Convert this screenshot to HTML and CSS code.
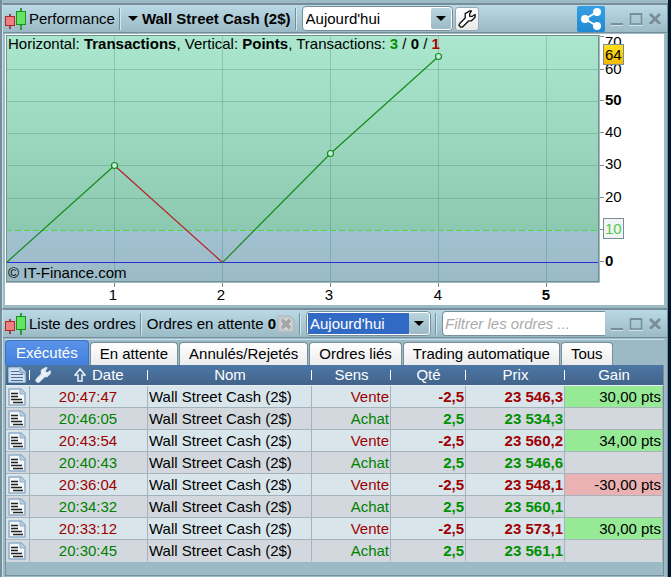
FILE: index.html
```html
<!DOCTYPE html>
<html lang="fr">
<head>
    <meta charset="UTF-8">
    <meta name="viewport" content="width=device-width, initial-scale=1.0">
    <title>Performance</title>
    <link rel="stylesheet" href="styles.css">
</head>
<body>
    <!-- shared icons -->
    <svg class="sprite" width="0" height="0">
        <symbol id="candles" viewBox="0 0 22 24">
            <path d="M5 7v15" stroke="#a04444" stroke-width="2"/>
            <rect x="0.500" y="9.500" width="9" height="9" fill="#f08080" stroke="#b02828"/>
            <path d="M16 1v22" stroke="#2f9c2f" stroke-width="2"/>
            <rect x="11.500" y="4.500" width="9" height="13" fill="#66e266" stroke="#159415"/>
        </symbol>
        <symbol id="wrench" viewBox="0 0 20 20">
            <path d="M2 15l6-6V4l5-3h2l-2 3v3h3l3-2v3l-4 4h-3l-7 7H3l-2-2z" stroke-width="1.500" stroke-linejoin="round"/>
        </symbol>
        <symbol id="doc" viewBox="0 0 18 18">
            <path d="M1 1h12l4 4v12H1z" fill="#f4f8fb" stroke="#8facca" stroke-width="1.500" stroke-linejoin="round"/>
            <path d="M12 1v5h5" fill="#bcd0e4" stroke="#8facca"/>
            <path d="M3 5.500h7M3 8.500h7M3 11.500h11M5 14.500h10" stroke="currentColor" stroke-width="1.500"/>
        </symbol>
        <symbol id="doc-head" viewBox="0 0 18 18">
            <path d="M1 2h12l4 4v10H1z" fill="#d6e4f2" stroke="#b8cfe6" stroke-width="1.500" stroke-linejoin="round"/>
            <path d="M12 2v5h5" fill="#9fbcda" stroke="#7d9dc0"/>
            <path d="M3 5.500h8M3 8.500h12M3 11.500h12M3 14.500h12" stroke="#4a6e98"/>
        </symbol>
        <symbol id="minimize" viewBox="0 0 14 14">
            <path d="M1 13h12" stroke="#cfe2e9" stroke-width="2"/>
            <path d="M1 12h12" stroke="#778e98" stroke-width="2"/>
        </symbol>
        <symbol id="maximize" viewBox="0 0 14 14">
            <path d="M1.500 2h11v10h-11z" fill="none" stroke="#778e98" stroke-width="1.500"/>
            <path d="M1 2h12" stroke="#778e98" stroke-width="2"/>
            <path d="M0 13.500h14" stroke="#cfe2e9"/>
        </symbol>
        <symbol id="close" viewBox="0 0 14 14">
            <path d="M2 3l10 10M12 3L2 13" stroke="#cfe2e9" stroke-width="2"/>
            <path d="M2 2l10 10M12 2L2 12" stroke="#778e98" stroke-width="3"/>
        </symbol>
    </svg>

    <section class="window">
        <header class="titlebar">
            <svg class="candles"><use href="#candles"/></svg>
            <h2>Performance</h2>
            <span class="separator"></span>
            <button class="instrument"><span class="caret"></span>Wall Street Cash (2$)</button>
            <span class="separator"></span>
            <span class="combo">
                <select aria-label="Période">
                    <option>Aujourd'hui</option>
                </select>
                <span class="combo-arrow"><span class="caret"></span></span>
            </span>
            <button class="tool" aria-label="Configurer"><svg fill="#fff" stroke="#111"><use href="#wrench"/></svg></button>
            <span class="window-buttons">
                <button class="share" aria-label="Partager">
                    <svg width="26" height="26" viewBox="0 0 26 26" fill="#fff">
                        <path d="M19 6L7 13l12 7" fill="none" stroke="#fff" stroke-width="2"/>
                        <circle cx="19" cy="6" r="4"/>
                        <circle cx="7" cy="13" r="4"/>
                        <circle cx="19" cy="20" r="4"/>
                    </svg>
                </button>
                <button aria-label="Réduire"><svg><use href="#minimize"/></svg></button>
                <button aria-label="Agrandir"><svg><use href="#maximize"/></svg></button>
                <button aria-label="Fermer"><svg><use href="#close"/></svg></button>
            </span>
        </header>

        <div class="chart">
            <svg viewBox="0 0 659 271">
                <defs>
                    <linearGradient id="gain" x2="0" y2="1">
                        <stop offset="0" stop-color="#abe7ce"/>
                        <stop offset="1" stop-color="#8dc9b0"/>
                    </linearGradient>
                    <linearGradient id="loss" x2="0" y2="1">
                        <stop offset="0" stop-color="#a3c2d1"/>
                        <stop offset="1" stop-color="#9abac7"/>
                    </linearGradient>
                    <linearGradient id="last" x2="0" y2="1">
                        <stop offset="0" stop-color="#ffe21c"/>
                        <stop offset="1" stop-color="#f4b800"/>
                    </linearGradient>
                </defs>
                <rect x="1" y="1" width="592" height="196" fill="url(#gain)"/>
                <rect x="1" y="196" width="592" height="51" fill="url(#loss)"/>

                <!-- grid -->
                <path d="M109.500 1v246M217.500 1v246M325.500 1v246M433.500 1v246M541.500 1v246M1 35.500h592M1 67.500h592M1 99.500h592M1 131.500h592M1 164.500h592" fill="none" stroke="#34665a" stroke-opacity=".24"/>
                <path d="M1 196.500h592" stroke="#4bd64b" stroke-dasharray="6 3"/>
                <path d="M1 228.500h592" stroke="#2c2cd8"/>

                <!-- profit curve -->
                <g fill="none" stroke-width="1.200">
                    <path d="M1.500 228.500l108-97" stroke="#178a1c"/>
                    <path d="M109.500 131.500l108 97" stroke="#b3232a"/>
                    <path d="M217.500 228.500l108-109 108-97" stroke="#178a1c"/>
                </g>
                <g fill="#c2f0dc" stroke="#178a1c" stroke-width="1.200">
                    <circle cx="109.500" cy="131.500" r="3"/>
                    <circle cx="325.500" cy="119.500" r="3"/>
                    <circle cx="433.500" cy="22.500" r="3"/>
                </g>
                <rect x="1.500" y="1.500" width="592" height="246" fill="none" stroke="#6f938c"/>
                <path d="M594.500 1v247.500H1" fill="none" stroke="#a5b8c0"/>

                <!-- axes -->
                <path d="M109.500 249v4M217.500 249v4M325.500 249v4M433.500 249v4M541.500 249v4M595 2.500h4M595 35.500h4M595 66.500h4M595 98.500h4M595 131.500h4M595 163.500h4M595 195.500h4M595 227.500h4" stroke="#778e98"/>
                <g>
                    <text x="600" y="13">70</text>
                    <text x="600" y="40">60</text>
                    <text x="600" y="71" class="strong">50</text>
                    <text x="600" y="103">40</text>
                    <text x="600" y="135">30</text>
                    <text x="600" y="168">20</text>
                    <text x="600" y="232" class="strong">0</text>
                </g>
                <rect x="598.500" y="10.500" width="20" height="20" fill="url(#last)" stroke="#778e98"/>
                <text x="600" y="26">64</text>
                <rect x="598.500" y="184.500" width="20" height="20" fill="#f3f3f3" stroke="#778e98"/>
                <text x="600" y="200" class="target">10</text>
                <g text-anchor="middle">
                    <text x="108" y="266">1</text>
                    <text x="216" y="266">2</text>
                    <text x="324" y="266">3</text>
                    <text x="433" y="266">4</text>
                    <text x="541" y="266" class="strong">5</text>
                </g>
            </svg>
            <p class="legend">Horizontal: <b>Transactions</b>, Vertical: <b>Points</b>, Transactions: <b class="won">3</b> / <b>0</b> / <b class="lost">1</b></p>
            <p class="copyright">© IT-Finance.com</p>
        </div>
    </section>

    <section class="window orders">
        <header class="titlebar">
            <svg class="candles"><use href="#candles"/></svg>
            <h2>Liste des ordres</h2>
            <span class="separator"></span>
            <span class="pending">Ordres en attente <b>0</b></span>
            <button class="cancel" aria-label="Annuler les ordres">
                <svg width="18" height="18" viewBox="0 0 18 18">
                    <path d="M1 1h12l4 4v12H1z" fill="#c4c8ca" stroke="#adb5b9"/>
                    <path d="M5 5l8 8M13 5l-8 8" stroke="#e9e9e9" stroke-width="6"/>
                    <path d="M5 5l8 8M13 5l-8 8" stroke="#a2a4a5" stroke-width="4"/>
                </svg>
            </button>
            <span class="separator"></span>
            <span class="combo selected">
                <select aria-label="Période des ordres">
                    <option>Aujourd'hui</option>
                </select>
                <span class="combo-arrow"><span class="caret"></span></span>
            </span>
            <span class="separator"></span>
            <input class="filter" type="text" placeholder="Filtrer les ordres ..." aria-label="Filtrer les ordres">
            <span class="window-buttons">
                <button aria-label="Réduire"><svg><use href="#minimize"/></svg></button>
                <button aria-label="Agrandir"><svg><use href="#maximize"/></svg></button>
                <button aria-label="Fermer"><svg><use href="#close"/></svg></button>
            </span>
        </header>

        <nav class="tabs">
            <button class="active">Exécutés</button>
            <button>En attente</button>
            <button>Annulés/Rejetés</button>
            <button>Ordres liés</button>
            <button>Trading automatique</button>
            <button>Tous</button>
        </nav>

        <div class="list">
            <table>
                <colgroup>
                    <col class="col-doc">
                    <col class="col-date">
                    <col>
                    <col class="col-side">
                    <col class="col-qty">
                    <col class="col-price">
                    <col class="col-gain">
                </colgroup>
                <thead>
                    <tr>
                        <th><svg class="doc"><use href="#doc-head"/></svg></th>
                        <th>
                            <span class="date-head">
                                <svg class="wrench" fill="#e8f0f8" stroke="#dbe8f4"><use href="#wrench"/></svg>
                                <svg width="12" height="14" viewBox="0 0 12 14"><path d="M6 1l5 6H8v6H4V7H1z" fill="#4e6f95" stroke="#e6eef6" stroke-width="1.500"/></svg>
                                Date
                            </span>
                        </th>
                        <th>Nom</th>
                        <th>Sens</th>
                        <th>Qté</th>
                        <th>Prix</th>
                        <th>Gain</th>
                    </tr>
                </thead>
                <tbody>
                    <tr class="sell">
                        <td><svg class="doc"><use href="#doc"/></svg></td>
                        <td>20:47:47</td><td>Wall Street Cash (2$)</td><td>Vente</td><td>-2,5</td><td>23 546,3</td><td class="profit">30,00 pts</td>
                    </tr>
                    <tr class="buy">
                        <td><svg class="doc"><use href="#doc"/></svg></td>
                        <td>20:46:05</td><td>Wall Street Cash (2$)</td><td>Achat</td><td>2,5</td><td>23 534,3</td><td></td>
                    </tr>
                    <tr class="sell">
                        <td><svg class="doc"><use href="#doc"/></svg></td>
                        <td>20:43:54</td><td>Wall Street Cash (2$)</td><td>Vente</td><td>-2,5</td><td>23 560,2</td><td class="profit">34,00 pts</td>
                    </tr>
                    <tr class="buy">
                        <td><svg class="doc"><use href="#doc"/></svg></td>
                        <td>20:40:43</td><td>Wall Street Cash (2$)</td><td>Achat</td><td>2,5</td><td>23 546,6</td><td></td>
                    </tr>
                    <tr class="sell">
                        <td><svg class="doc"><use href="#doc"/></svg></td>
                        <td>20:36:04</td><td>Wall Street Cash (2$)</td><td>Vente</td><td>-2,5</td><td>23 548,1</td><td class="deficit">-30,00 pts</td>
                    </tr>
                    <tr class="buy">
                        <td><svg class="doc"><use href="#doc"/></svg></td>
                        <td>20:34:32</td><td>Wall Street Cash (2$)</td><td>Achat</td><td>2,5</td><td>23 560,1</td><td></td>
                    </tr>
                    <tr class="sell">
                        <td><svg class="doc"><use href="#doc"/></svg></td>
                        <td>20:33:12</td><td>Wall Street Cash (2$)</td><td>Vente</td><td>-2,5</td><td>23 573,1</td><td class="profit">30,00 pts</td>
                    </tr>
                    <tr class="buy">
                        <td><svg class="doc"><use href="#doc"/></svg></td>
                        <td>20:30:45</td><td>Wall Street Cash (2$)</td><td>Achat</td><td>2,5</td><td>23 561,1</td><td></td>
                    </tr>
                </tbody>
            </table>
        </div>
    </section>
</body>
</html>
```
FILE: styles.css
```css
* {
    margin: 0;
    padding: 0;
    box-sizing: border-box;
}

body {
    font-family: 'Liberation Sans', Arial, sans-serif;
    font-size: 15px;
    line-height: 18px;
    color: #000;
    min-height: 100vh;
    background: #9bbac6;
    border-left: 2px solid #778e98;
    border-right: 3px solid #001530;
    padding-top: 3px;
    display: flex;
    flex-direction: column;
}

button,
input,
select {
    font: inherit;
    color: inherit;
}

button {
    border: none;
    background: none;
}

svg {
    display: block;
}

.sprite {
    position: absolute;
}

.window {
    background: #9bbac6;
    border-top: 2px solid #778e98;
    border-left: 1px solid #c3e2ee;
    border-right: 1px solid #778e98;
    padding-bottom: 3px;
}

.orders {
    flex: 1;
    display: flex;
    flex-direction: column;
    padding-bottom: 1px;
}

/* Title bar */

.titlebar {
    height: 28px;
    display: flex;
    align-items: center;
    padding: 0 5px 0 2px;
    background: linear-gradient(#b9d9e6, #9bbac6);
    border-bottom: 1px solid #778e98;
    white-space: nowrap;
}

.titlebar h2 {
    font-size: 15px;
    font-weight: normal;
    margin-left: 2px;
}

.candles {
    width: 22px;
    height: 24px;
    flex: none;
}

.separator {
    width: 2px;
    height: 22px;
    flex: none;
    margin: 0 5px 0 4px;
    background: linear-gradient(90deg, #778e98 50%, #d2e8f0 50%);
}

.caret {
    border: 5px solid transparent;
    border-top-color: #000;
    border-bottom: none;
}

.instrument {
    display: flex;
    align-items: center;
    gap: 4px;
    font-weight: bold;
    padding-left: 2px;
}

.combo {
    width: 151px;
    height: 25px;
    display: flex;
    padding: 1px;
    background: #fff;
    border: 1px solid #778e98;
    border-radius: 4px;
}

.combo select {
    flex: 1;
    min-width: 0;
    appearance: none;
    border: none;
    outline: none;
    background: none;
    padding-left: 2px;
}

.combo-arrow {
    width: 20px;
    display: flex;
    align-items: center;
    justify-content: center;
    background: linear-gradient(#b9d5e0, #9bbac6);
    border-radius: 2px;
}

.combo.selected {
    width: 125px;
}

.selected select {
    color: #fff;
    background: #316ac5;
}

.tool {
    width: 24px;
    height: 24px;
    margin-left: 2px;
    padding: 2px;
    background: linear-gradient(#fff, #e8e8e8);
    border: 1px solid #9aa9b0;
    border-radius: 3px;
}

.tool svg {
    width: 18px;
    height: 18px;
}

.cancel {
    margin-left: 1px;
}

.filter {
    flex: 1;
    min-width: 0;
    height: 25px;
    padding-left: 2px;
    background: #fff;
    border: 1px solid #778e98;
    border-right: none;
    border-radius: 4px 0 0 4px;
    outline: none;
}

.filter::placeholder {
    color: #aaa;
    font-style: italic;
    opacity: 1;
}

.window-buttons {
    display: flex;
    align-items: center;
    gap: 5px;
    margin-left: auto;
    padding-left: 5px;
}

.window-buttons svg {
    width: 14px;
    height: 14px;
}

.window-buttons .share {
    padding: 0 1px;
    background: linear-gradient(#35a0e4, #2089d2);
    border-radius: 2px;
}

.window-buttons .share svg {
    width: 26px;
    height: 26px;
}

/* Performance chart */

.chart {
    position: relative;
    margin: 1px 3px 0 2px;
    background: #fff;
}

.chart svg {
    width: 100%;
    height: auto;
}

.chart text {
    font-size: 15px;
}

.chart .strong {
    font-weight: bold;
}

.chart .target {
    fill: #4fc94f;
}

.legend,
.copyright {
    position: absolute;
    left: 3px;
}

.legend {
    top: 1px;
}

.copyright {
    bottom: 23px;
}

.won {
    color: #009000;
}

.lost {
    color: #b00000;
}

/* Tabs */

.tabs {
    display: flex;
    align-items: flex-end;
    gap: 1px;
    margin: 1px 3px 0 2px;
    border-top: 1px solid #c3e2ee;
}

.tabs button {
    height: 23px;
    padding: 0 9px;
    background: linear-gradient(#fff, #ececec);
    border: 1px solid #778e98;
    border-bottom: none;
    border-radius: 4px 4px 0 0;
    white-space: nowrap;
}

.tabs .active {
    height: 25px;
    padding: 0 10px;
    color: #fff;
    background: linear-gradient(#5a93ea, #4480dc);
    border-color: #3d70c0;
}

/* Orders list */

.list {
    flex: 1;
    margin: 0 3px 0 2px;
    border: 1px solid #778e98;
    border-top: none;
}

table {
    width: 100%;
    table-layout: fixed;
    border-collapse: separate;
    border-spacing: 0;
}

.col-doc {
    width: 24px;
}

.col-date {
    width: 118px;
}

.col-side {
    width: 79px;
}

.col-qty {
    width: 75px;
}

.col-price {
    width: 99px;
}

.col-gain {
    width: 98px;
}

th {
    height: 21px;
    font-weight: normal;
    color: #fff;
    background: linear-gradient(90deg, #fff, #fff) right center / 1px 10px no-repeat, linear-gradient(#4d77a5, #42638b);
    border-bottom: 1px solid #e8f0f4;
}

th:last-child {
    background: linear-gradient(#4d77a5, #42638b);
}

.doc {
    width: 18px;
    height: 18px;
    margin-left: 2px;
    color: #222;
}

.date-head {
    display: flex;
    align-items: center;
    gap: 6px;
    padding-left: 5px;
}

.wrench {
    width: 16px;
    height: 16px;
    margin-right: 17px;
}

td {
    height: 22px;
    padding-right: 1px;
    text-align: right;
    border-right: 1px solid #a5b4bc;
    border-bottom: 1px solid #a5b4bc;
    white-space: nowrap;
}

tr:last-child td {
    border-bottom-color: #d2d8de;
}

.sell {
    background: #d8e6ec;
    color: #a00000;
}

.buy {
    background: #d2d8de;
    color: #008000;
}

td:nth-child(2) {
    text-align: center;
}

td:nth-child(3) {
    padding-left: 1px;
    text-align: left;
    color: #000;
}

td:nth-child(5),
td:nth-child(6) {
    font-weight: bold;
}

.buy td:nth-child(5),
.buy td:nth-child(6) {
    color: #009000;
}

td:last-child {
    color: #000;
}

.profit {
    background: #96ea96;
}

.deficit {
    background: #eab2b2;
}
```
